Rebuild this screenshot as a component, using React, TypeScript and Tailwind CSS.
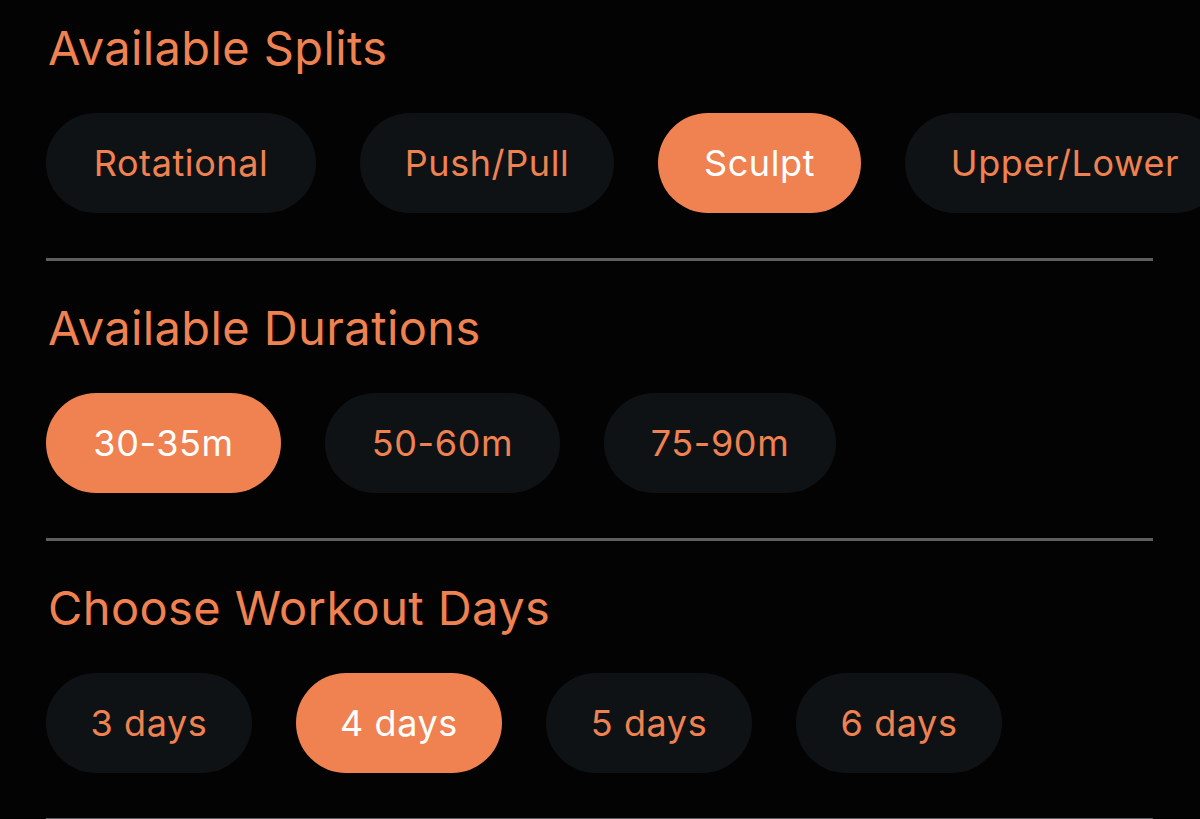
import React from "react";

type Option = { label: string; width: string };

const sections: { title: string; selected: string; options: Option[] }[] = [
  {
    title: "Available Splits",
    selected: "Sculpt",
    options: [
      { label: "Rotational", width: "w-[270px]" },
      { label: "Push/Pull", width: "w-[254px]" },
      { label: "Sculpt", width: "w-[203px]" },
      { label: "Upper/Lower", width: "w-[320px]" },
    ],
  },
  {
    title: "Available Durations",
    selected: "30-35m",
    options: [
      { label: "30-35m", width: "w-[235px]" },
      { label: "50-60m", width: "w-[235px]" },
      { label: "75-90m", width: "w-[232px]" },
    ],
  },
  {
    title: "Choose Workout Days",
    selected: "4 days",
    options: [
      { label: "3 days", width: "w-[206px]" },
      { label: "4 days", width: "w-[206px]" },
      { label: "5 days", width: "w-[206px]" },
      { label: "6 days", width: "w-[206px]" },
    ],
  },
];

export default function App() {
  return (
    <div
      className="w-[1200px] h-[819px] overflow-hidden bg-[#030303] pl-[46px] pt-[24px]"
      style={{ fontFamily: "Inter, 'Noto Sans', sans-serif" }}
    >
      {sections.map((section) => (
        <section key={section.title} className="mb-[43px]">
          {/* Section title */}
          <h2 className="text-[47px] leading-none text-[#ef8250] pl-[2px] tracking-[0.4px]">{section.title}</h2>

          {/* Options */}
          <div className="mt-[42px] flex gap-[44px] whitespace-nowrap">
            {section.options.map((opt) => {
              const isActive = opt.label === section.selected;
              return (
                <button
                  key={opt.label}
                  className={`${opt.width} h-[100px] shrink-0 rounded-full text-[36px] leading-none tracking-[0.6px] flex items-center justify-center ${
                    isActive ? "bg-[#ef8250] text-white" : "bg-[#0f1215] text-[#ef8250]"
                  }`}
                >
                  {opt.label}
                </button>
              );
            })}
          </div>

          <div className="mt-[45px] h-[3px] w-[1107px] bg-[#5e5e61]" />
        </section>
      ))}
    </div>
  );
}
